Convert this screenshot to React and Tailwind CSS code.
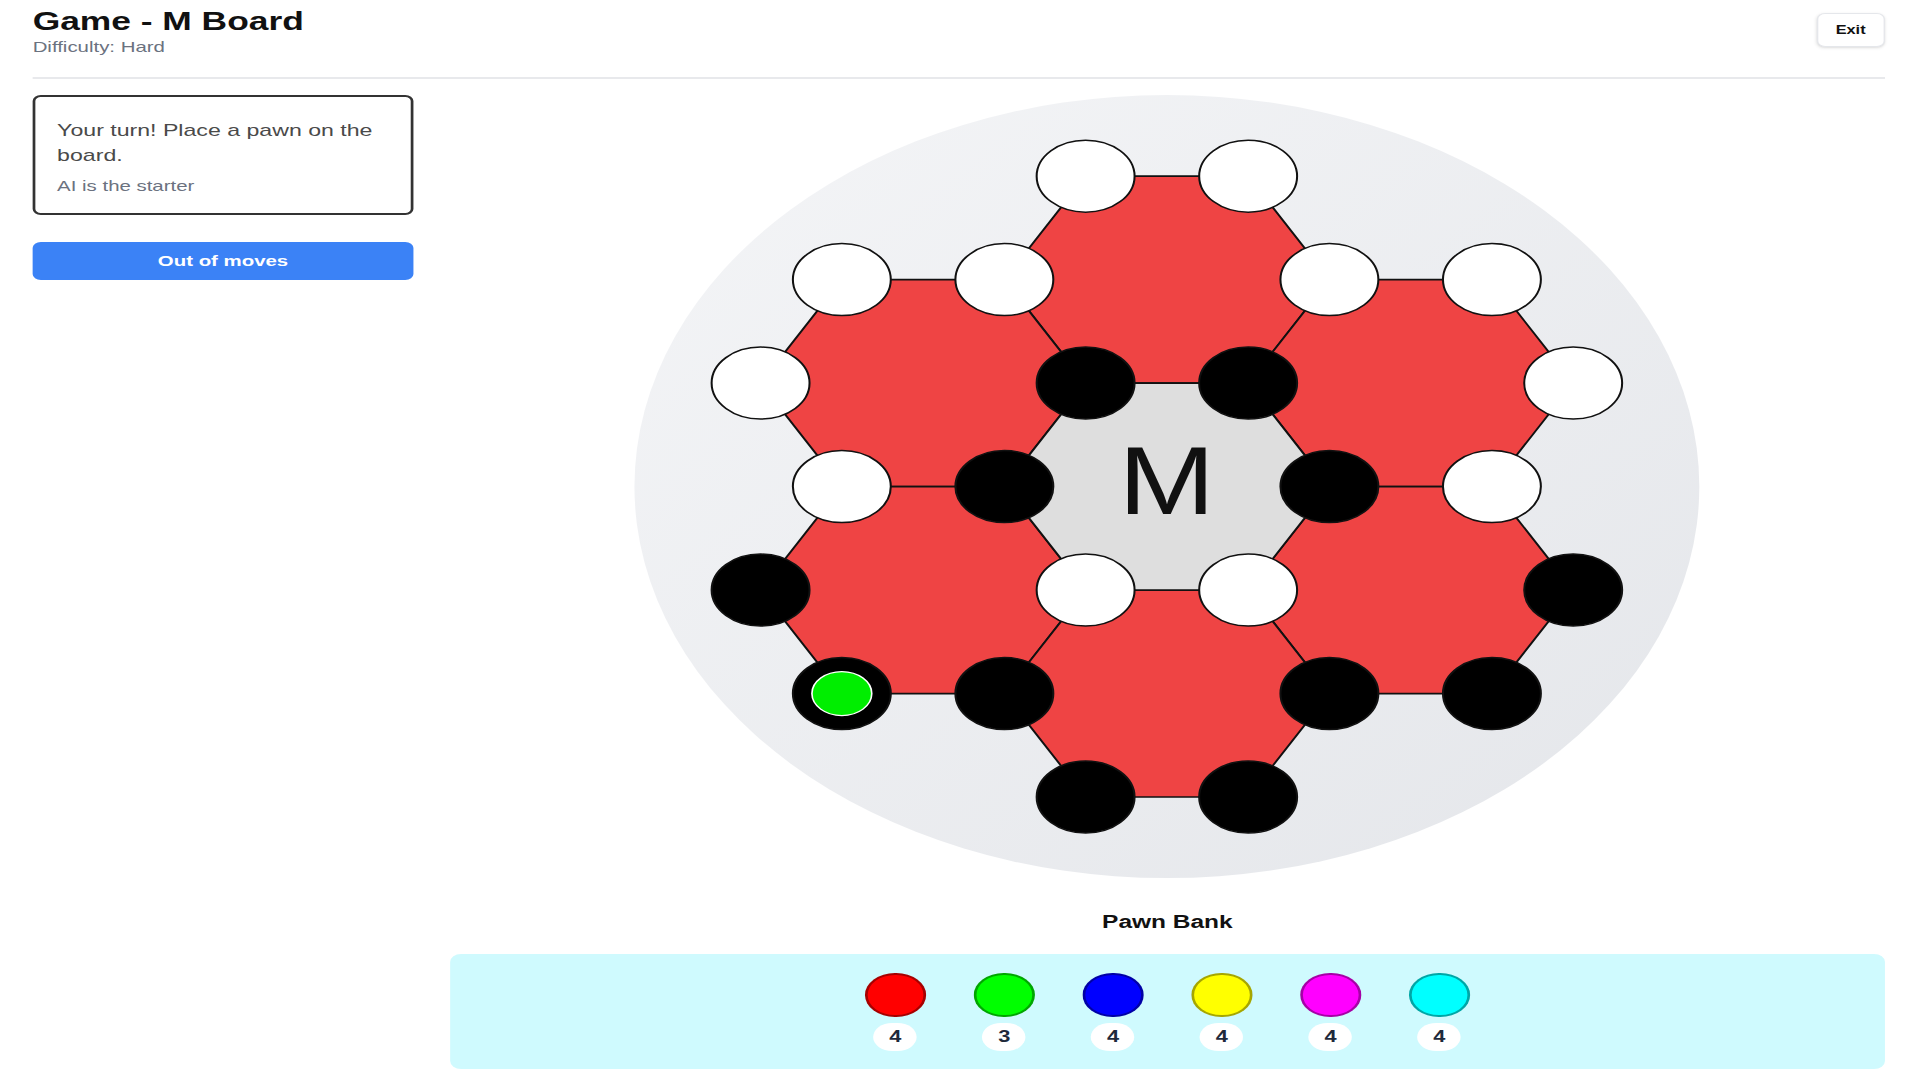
import React from 'react';

const R = 119.5;
const H = (R * Math.sqrt(3)) / 2;
const CX = 392;
const CY = 391.6;

// hex centres, in units of (R, H)
const HEXES = [
  { dx: 0, dy: -2, fill: '#ef4444' },
  { dx: -1.5, dy: -1, fill: '#ef4444' },
  { dx: 1.5, dy: -1, fill: '#ef4444' },
  { dx: -1.5, dy: 1, fill: '#ef4444' },
  { dx: 1.5, dy: 1, fill: '#ef4444' },
  { dx: 0, dy: 2, fill: '#ef4444' },
  { dx: 0, dy: 0, fill: '#dedede' },
];

// w = white, b = black, g = black with the green marker
const PAWNS = [
  [-0.5, -3, 'w'], [0.5, -3, 'w'],
  [-2, -2, 'w'], [-1, -2, 'w'], [1, -2, 'w'], [2, -2, 'w'],
  [-2.5, -1, 'w'], [-0.5, -1, 'b'], [0.5, -1, 'b'], [2.5, -1, 'w'],
  [-2, 0, 'w'], [-1, 0, 'b'], [1, 0, 'b'], [2, 0, 'w'],
  [-2.5, 1, 'b'], [-0.5, 1, 'w'], [0.5, 1, 'w'], [2.5, 1, 'b'],
  [-2, 2, 'g'], [-1, 2, 'b'], [1, 2, 'b'], [2, 2, 'b'],
  [-0.5, 3, 'b'], [0.5, 3, 'b'],
];

const BANK = [
  { color: 'bg-[#ff0000]', count: 4 },
  { color: 'bg-[#00ff00]', count: 3 },
  { color: 'bg-[#0000ff]', count: 4 },
  { color: 'bg-[#ffff00]', count: 4 },
  { color: 'bg-[#ff00ff]', count: 4 },
  { color: 'bg-[#00ffff]', count: 4 },
];

function hexPoints(x, y) {
  return [
    [x + R, y], [x + R / 2, y + H], [x - R / 2, y + H],
    [x - R, y], [x - R / 2, y - H], [x + R / 2, y - H],
  ].map(p => p.join(',')).join(' ');
}

function Board() {
  return (
    <svg width="784" height="784" viewBox="0 0 784 784">
      <defs>
        <linearGradient id="boardBg" x1="0" y1="0" x2="1" y2="1">
          <stop offset="0%" stopColor="#f4f5f7" />
          <stop offset="100%" stopColor="#e4e6ea" />
        </linearGradient>
      </defs>
      <circle cx={CX} cy={CY} r="391.5" fill="url(#boardBg)" />
      {HEXES.map((hx, i) => (
        <polygon
          key={i}
          points={hexPoints(CX + hx.dx * R, CY + hx.dy * H)}
          fill={hx.fill}
          stroke="#111"
          strokeWidth="1.6"
        />
      ))}
      <text
        x={CX}
        y={CY + 27.5}
        textAnchor="middle"
        fontSize="97"
        fontFamily="'Liberation Sans', Arial, sans-serif"
        fill="#111"
        textLength="71"
        lengthAdjust="spacingAndGlyphs"
      >M</text>
      {PAWNS.map(([dx, dy, kind], i) => {
        const x = CX + dx * R;
        const y = CY + dy * H;
        return (
          <g key={i}>
            <circle cx={x} cy={y} r="36" fill={kind === 'w' ? '#fff' : '#000'} stroke="#111" strokeWidth="1.5" />
            {kind === 'g' && <circle cx={x} cy={y} r="22" fill="#00ee00" stroke="#fff" strokeWidth="1.2" />}
          </g>
        );
      })}
    </svg>
  );
}

export default function App() {
  return (
    <div className="h-screen w-full overflow-hidden bg-white">
      <div className="w-[1411.76px] origin-top-left scale-x-[1.36] pl-6 pr-[26px] font-['Liberation_Sans',Arial,sans-serif]">
        {/* Header */}
        <div className="flex items-start justify-between border-b-2 border-[#e8e9ec] pt-[5px] pb-[20px]">
          <div>
            <h1 className="text-[26px] leading-[32px] font-bold text-[#111]">Game - M Board</h1>
            <p className="text-[15px] leading-[20px] text-[#6b7280]">Difficulty: Hard</p>
          </div>
          <button className="mt-[8px] h-[34px] px-[13px] rounded-md border border-[#e5e7eb] bg-white shadow-sm text-[12px] font-bold text-[#111]">
            Exit
          </button>
        </div>

        {/* Main */}
        <div className="flex items-start gap-[27px] pt-4">
          <div className="w-[280px] shrink-0">
            <div className="border-2 border-[#333] rounded-md px-4 pt-[21px] pb-[17px]">
              <p className="text-[17px] leading-[25px] text-[#4a4a4a]">Your turn! Place a pawn on the board.</p>
              <p className="mt-2 text-[15px] leading-[20px] text-[#6b7280]">AI is the starter</p>
            </div>
            <button className="mt-[27px] w-full h-[38px] rounded-md bg-[#3b82f6] text-white text-[15px] font-bold">
              Out of moves
            </button>
          </div>

          <div className="flex-1 flex flex-col items-center">
            <Board />
            <h2 className="mt-[29px] text-[18px] leading-[28px] font-bold text-[#111]">Pawn Bank</h2>
            <div className="mt-[18px] w-full h-[115px] rounded-lg bg-[#cffafe] pt-[19px] flex justify-center gap-8">
              {BANK.map((p, i) => (
                <div key={i} className="w-12 flex flex-col items-center">
                  <div className={`w-[45px] h-[44px] rounded-full border-2 border-black/35 ${p.color}`} />
                  <div className="mt-1.5 w-8 h-7 rounded-full bg-white flex items-center justify-center text-[16px] font-bold text-[#1e293b]">
                    {p.count}
                  </div>
                </div>
              ))}
            </div>
          </div>
        </div>
      </div>
    </div>
  );
}
